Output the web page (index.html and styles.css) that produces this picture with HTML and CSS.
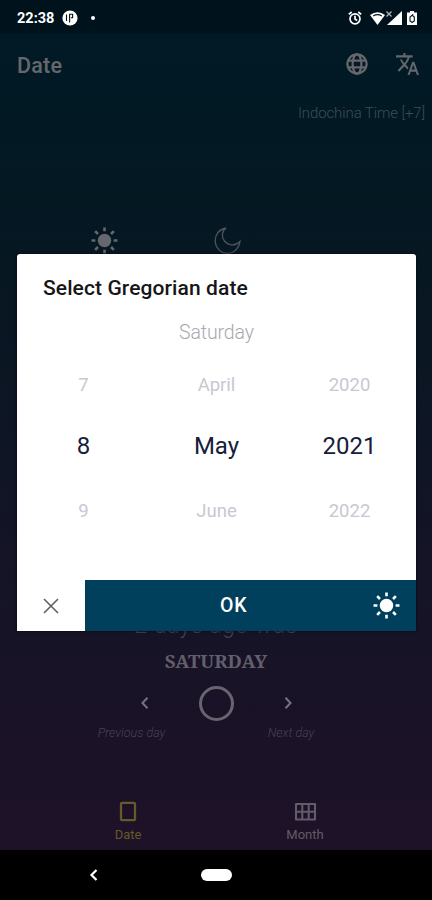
FILE: index.html
```html
<!DOCTYPE html>
<html lang="en">
<head>
<meta charset="utf-8">
<title>Date</title>
<link rel="stylesheet" href="styles.css">
</head>
<body>
<svg width="0" height="0" class="defs">
  <symbol id="sun" viewBox="0 0 26 26">
    <circle cx="13" cy="13" r="6.5" fill="currentColor"/>
    <path d="M13 .5v3.7M13 21.8v3.7M.5 13h3.7M21.8 13h3.7M4 4l2.7 2.7M19.3 19.3L22 22M4 22l2.7-2.7M19.3 6.7L22 4" stroke="currentColor" stroke-width="2.5" fill="none"/>
  </symbol>
</svg>
<div class="phone">
  <header class="status">
    <span class="clock">22:38</span>
    <svg class="parking" width="16" height="16" viewBox="0 0 16 16"><circle cx="8" cy="8" r="7.6" fill="#fff"/><path d="M4.5 4.5v6.5M7.6 12.5V4.2h3v3.6H8.8" fill="none" stroke="#00131d" stroke-width="1.1"/></svg>
    <span class="dot"></span>
    <svg class="alarm" width="14" height="14" viewBox="0 0 14 14" fill="none" stroke="#fff" stroke-width="1.7"><circle cx="7" cy="7.8" r="5"/><path d="M.8 3.4L3.7 1M13.2 3.4L10.3 1M7 4.8v3.3l2.2 1.3"/></svg>
    <svg class="signal" width="33" height="15" viewBox="0 0 33 15"><path d="M0 4Q7.5-1.5 15 4L7.5 14z" fill="#fff"/><path d="M3.2 4.9Q7.5 2.4 11.8 4.9" fill="none" stroke="#00131d" stroke-width="1.2"/><path d="M32 0v14H17z" fill="#fff"/><path d="M16.5.5l5 5M21.5.5l-5 5" stroke="#b0b7bb" stroke-width="1.2"/></svg>
    <svg class="battery" width="10" height="14" viewBox="0 0 10 14"><path d="M0 1.5h3V0h4v1.5h3V14H0z" fill="#fff"/><path d="M6.2 3.4L3 6v4l2 1.3M5 4l2.3 2v4L4.6 11.8" fill="none" stroke="#00131d" stroke-width="1.1"/></svg>
  </header>
  <div class="toolbar">
    <h1>Date</h1>
    <svg width="22" height="22" viewBox="0 0 22 22" fill="none" stroke="currentColor" stroke-width="2.2"><circle cx="11" cy="11" r="9.6"/><ellipse cx="11" cy="11" rx="4.4" ry="9.6"/><path d="M1.9 7.7h18.2M1.9 14.3h18.2"/></svg>
    <svg class="translate" width="23" height="22" viewBox="1 2 22 20" preserveAspectRatio="none" fill="currentColor"><path d="M12.87 15.07l-2.54-2.51.03-.03A17.52 17.52 0 0 0 14.07 6H17V4h-7V2H8v2H1v2h11.17C11.5 7.92 10.44 9.75 9 11.35 8.07 10.32 7.3 9.19 6.69 8h-2c.73 1.63 1.73 3.17 2.98 4.56l-5.09 5.02L4 19l5-5 3.11 3.11.76-2.04zM18.5 10h-2L12 22h2l1.12-3h4.75L21 22h2l-4.5-12zm-2.62 7l1.62-4.33L19.12 17h-3.24z"/></svg>
  </div>
  <div class="zone">Indochina Time [+7]</div>
  <div class="sky">
    <svg width="27" height="27"><use href="#sun"/></svg>
    <svg class="moon" width="28" height="28" viewBox="0 0 28 28" fill="none" stroke="currentColor" stroke-width="1.3"><path d="M12 1C4.5 2.5 1 8 1.2 14C1.5 21 7 26.5 14 26.3C21 26.2 25.6 20 26 14.5C23.5 17 20.5 18.4 17 17.8C11.5 17 8 12 8.4 7.4C8.6 4.8 10 2.4 12 1z"/></svg>
  </div>
  <main class="day">
    <div class="ago">2 days ago was</div>
    <div class="weekday">SATURDAY</div>
    <div class="controls">
      <svg width="10" height="14" viewBox="0 0 10 14"><path d="M7.5 1.8L2.5 7l5 5.2" fill="none" stroke="currentColor" stroke-width="2"/></svg>
      <span class="ring"></span>
      <svg width="10" height="14" viewBox="0 0 10 14"><path d="M2.5 1.8L7.5 7l-5 5.2" fill="none" stroke="currentColor" stroke-width="2"/></svg>
    </div>
    <div class="captions"><span class="previous">Previous day</span><span class="next">Next day</span></div>
  </main>
  <nav class="tabs">
    <div class="tab active"><svg width="18" height="21" viewBox="0 0 18 21"><rect x="2" y="1.8" width="14" height="17.4" rx="1.2" fill="none" stroke="currentColor" stroke-width="2.3"/></svg><span>Date</span></div>
    <div class="tab"><svg width="23" height="21" viewBox="0 0 23 21"><path d="M2 3h19v15.5H2zM8.3 3v15.5M14.7 3v15.5M2 10.7h19" fill="none" stroke="currentColor" stroke-width="2.1" stroke-linejoin="round"/></svg><span>Month</span></div>
  </nav>
  <footer class="system">
    <svg width="10" height="14" viewBox="0 0 10 14"><path d="M7.5 2L2.5 7l5 5" fill="none" stroke="#fff" stroke-width="2.2"/></svg>
    <span class="home"></span>
  </footer>
  <section class="dialog">
    <h2>Select Gregorian date</h2>
    <div class="chosen-day">Saturday</div>
    <div class="picker">
      <span>7</span><span>April</span><span>2020</span>
      <span class="on">8</span><span class="on">May</span><span class="on">2021</span>
      <span>9</span><span>June</span><span>2022</span>
    </div>
    <div class="actions">
      <div class="cancel"><svg width="16" height="16" viewBox="0 0 16 16"><path d="M1 1l14 14M15 1L1 15" stroke="#606060" stroke-width="1.6"/></svg></div>
      <div class="confirm"><span>OK</span><svg width="27" height="27"><use href="#sun"/></svg></div>
    </div>
  </section>
</div>
</body>
</html>
```
FILE: styles.css
```css
* { box-sizing: border-box; }
body { margin: 0; font-family: Roboto, "Liberation Sans", sans-serif; }
svg { display: block; flex: none; }
.defs { position: absolute; }
.phone {
  position: relative;
  display: flex;
  flex-direction: column;
  width: 432px;
  height: 900px;
  overflow: hidden;
  color: #66676d;
  background: linear-gradient(#001a26 0, #021923 130px, #071722 280px, #141426 560px, #1b1227 750px, #1e1228 850px);
}
.status { display: flex; align-items: center; height: 34px; padding: 2px 15px 0 17px; background: #00121b; }
.clock { width: 45px; color: #fff; font-size: 14.5px; font-weight: 700; }
.dot { width: 4px; height: 4px; margin-left: 13px; border-radius: 50%; background: #fff; }
.alarm { margin-left: auto; margin-right: 8px; }
.signal { margin-right: 4px; }
.toolbar { display: flex; align-items: center; height: 59px; padding: 0 13px 0 17px; }
h1 { flex: 1; margin: 3px 0 0; font-size: 21.5px; font-weight: 500; letter-spacing: .2px; }
.translate { margin-left: 28px; }
.zone { height: 134px; padding: 10px 7px 0 0; color: #3d4d57; font-size: 15px; font-weight: 300; line-height: 20px; letter-spacing: -.1px; text-align: right; }
.sky { display: flex; gap: 96px; height: 381px; padding-left: 91px; }
.moon { color: #4c565d; }
.day { height: 182px; text-align: center; }
.ago { height: 40px; color: #444252; font-size: 23px; font-weight: 300; line-height: 36px; letter-spacing: .5px; }
.weekday { height: 28px; color: #625e6b; font-family: "Noto Serif", "DejaVu Serif", "Liberation Serif", serif; font-size: 18.7px; font-weight: 700; line-height: 26px; }
.controls { display: flex; align-items: center; justify-content: center; gap: 49px; height: 54px; color: #777281; }
.ring { width: 35px; height: 35px; border: 3px solid #68636f; border-radius: 50%; }
.captions { display: grid; grid-template-columns: 69px 48px; column-gap: 101px; padding-left: 97px; color: #494254; font-size: 12.5px; font-style: italic; font-weight: 300; white-space: nowrap; line-height: 16px; margin-top: -5px; }
.tabs { display: grid; grid-template-columns: 78px 276px; padding-left: 89px; height: 60px; padding-top: 11px; }
.tab { display: flex; flex-direction: column; align-items: center; gap: 5px; font-size: 13px; line-height: 16px; color: #625b6a; }
.tab.active { color: #665a29; }
.system { display: flex; align-items: center; height: 50px; padding-left: 89px; background: #000; }
.home { width: 31px; height: 12px; margin-left: 102px; border-radius: 6px; background: #fff; }
.dialog { position: absolute; left: 17px; top: 254px; display: flex; flex-direction: column; width: 399px; height: 377px; overflow: hidden; border-radius: 3px 3px 0 0; background: #fff; box-shadow: 0 0 3px #080812; }
h2 { height: 67px; margin: 0; padding: 21px 0 0 26px; color: #161618; font-size: 21px; font-weight: 500; letter-spacing: .1px; line-height: 27px; }
.chosen-day { height: 35px; color: #a9a9b0; font-size: 19.5px; font-weight: 300; letter-spacing: -.1px; line-height: 24px; text-align: center; }
.picker { display: grid; grid-template: 58px 64px 66px / repeat(3, 1fr); align-items: center; text-align: center; color: #c9c7d2; font-size: 18.5px; }
.picker .on { color: #17203a; font-size: 24px; }
.actions { display: flex; height: 51px; margin-top: auto; }
.cancel { display: flex; align-items: center; justify-content: center; width: 68px; }
.confirm { display: flex; flex: 1; align-items: center; justify-content: space-between; padding: 0 16px 0 135px; background: #00405c; color: #fff; font-size: 19.5px; font-weight: 500; letter-spacing: .7px; }
```
